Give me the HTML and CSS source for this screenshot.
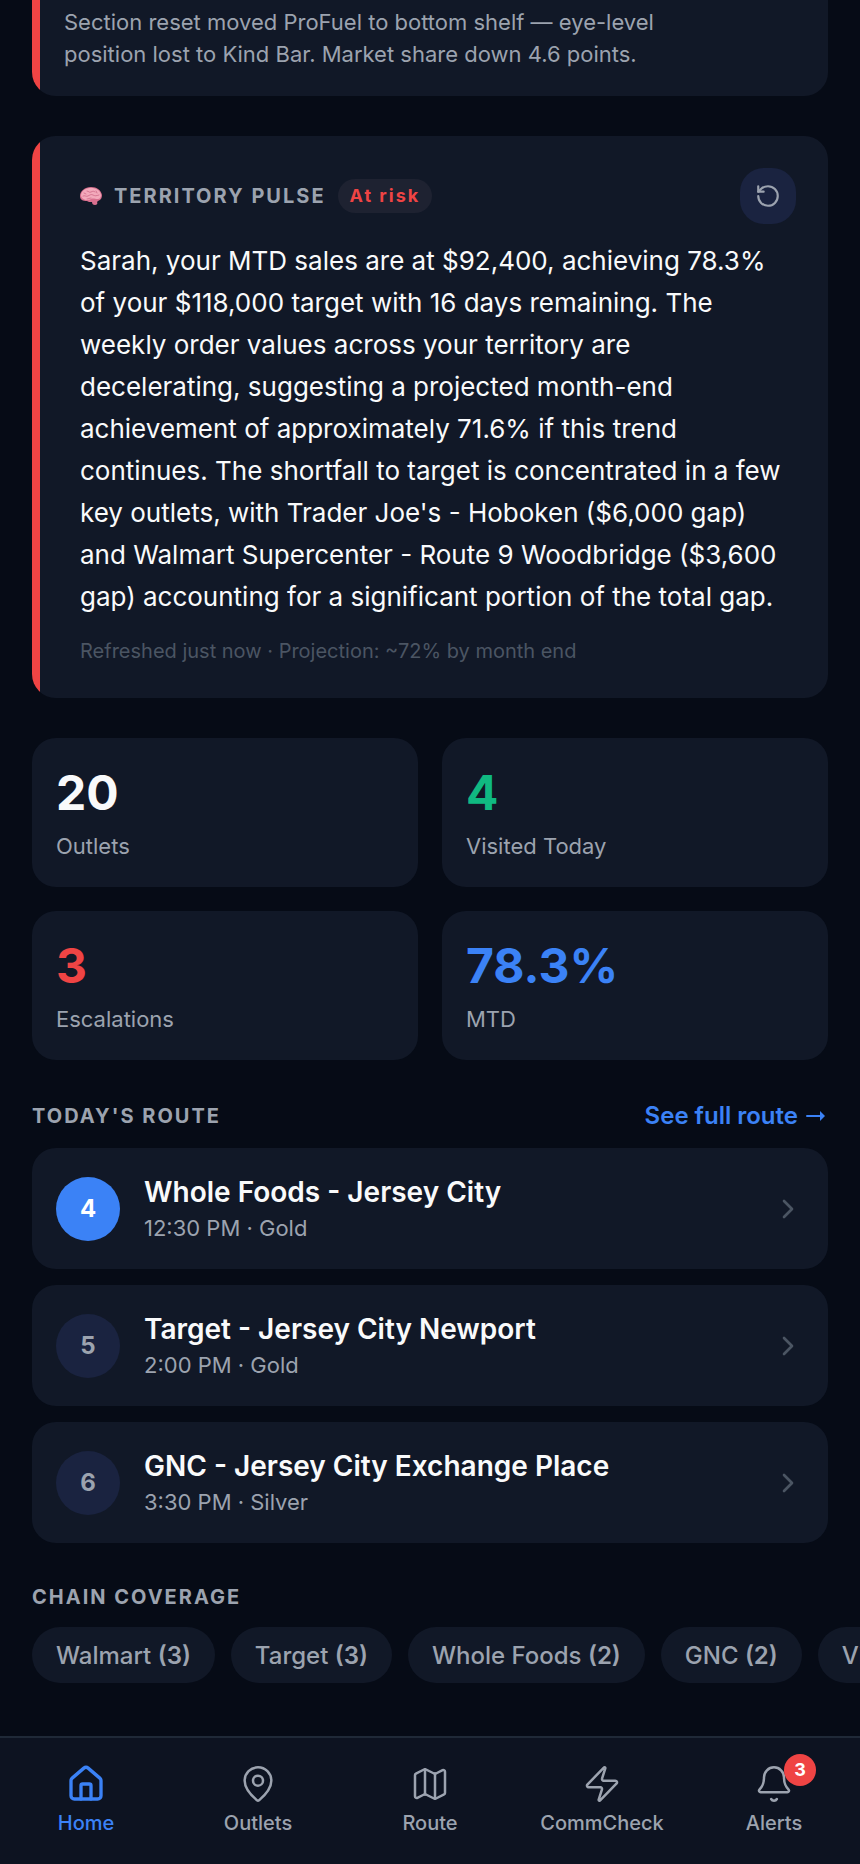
FILE: index.html
```html
<!DOCTYPE html>
<html lang="en">
<head>
    <meta charset="UTF-8">
    <meta name="viewport" content="width=device-width, initial-scale=1.0">
    <title>Territory Home</title>
    <link rel="stylesheet" href="styles.css">
</head>
<body>
    <main class="content">
        <section class="alert-card">
            <p class="alert-text">Section reset moved ProFuel to bottom shelf — eye-level position lost to Kind Bar. Market share down 4.6 points.</p>
        </section>

        <section class="pulse-card">
            <div class="pulse-header">
                <svg class="brain" viewBox="0 0 22 18" aria-hidden="true">
                    <path fill="#d9708f" d="M0 9C0 4 5 0 11 0c6 0 10 3 11 8 0 3-1 5-4 6l-1 1c1 1 0 3-2 3s-3-1-3-3c-2 0-4 0-5-1-4 0-7-1-7-5z"/>
                    <path fill="#f3a9bb" d="M1 8C2 3 6 1 11 1c5 0 9 2 10 7 0 2-1 4-3 4-3 0-5-1-7 0-3 2-10 1-10-4z"/>
                    <path fill="none" stroke="#c8607f" stroke-width=".7" stroke-linecap="round" d="M3 9c2-1 3 1 5 0s3-2 5-1 3 1 6 0M7 4c2 0 2 2 4 1s3-1 4 0M7 12c2 0 2-1 4-1M4 6l2 1M16 4l1 2"/>
                </svg>
                <h2 class="section-title">TERRITORY PULSE</h2>
                <span class="risk-badge">At risk</span>
                <button class="refresh" type="button" aria-label="Refresh">
                    <svg class="icon-refresh" viewBox="0 0 24 24"><path d="M3 12a9 9 0 1 0 9-9 9.75 9.75 0 0 0-6.74 2.74L3 8"/><path d="M3 3v5h5"/></svg>
                </button>
            </div>
            <p class="pulse-text">Sarah, your MTD sales are at $92,400, achieving 78.3% of your $118,000 target with 16 days remaining. The weekly order values across your territory are decelerating, suggesting a projected month-end achievement of approximately 71.6% if this trend continues. The shortfall to target is concentrated in a few key outlets, with Trader Joe's - Hoboken ($6,000 gap) and Walmart Supercenter - Route 9 Woodbridge ($3,600 gap) accounting for a significant portion of the total gap.</p>
            <p class="pulse-footer">Refreshed just now · Projection: ~72% by month end</p>
        </section>

        <section class="stats">
            <div class="stat">
                <div class="stat-value">20</div>
                <div class="stat-label">Outlets</div>
            </div>
            <div class="stat">
                <div class="stat-value green">4</div>
                <div class="stat-label">Visited Today</div>
            </div>
            <div class="stat">
                <div class="stat-value red">3</div>
                <div class="stat-label">Escalations</div>
            </div>
            <div class="stat">
                <div class="stat-value blue">78.3%</div>
                <div class="stat-label">MTD</div>
            </div>
        </section>

        <section class="section">
            <div class="section-header">
                <h2 class="section-title">TODAY'S ROUTE</h2>
                <a class="see-all" href="#route">See full route
                    <svg class="arrow" viewBox="0 0 24 24" aria-hidden="true"><path d="M3 12h14" fill="none" stroke="currentColor" stroke-width="2"/><path d="M16 7l5 5-5 5z" fill="currentColor"/></svg>
                </a>
            </div>
            <div class="route-list">
                <a class="stop" href="#stop-4">
                    <span class="stop-number current">4</span>
                    <span class="stop-info">
                        <span class="stop-name">Whole Foods - Jersey City</span>
                        <span class="stop-meta">12:30 PM · Gold</span>
                    </span>
                    <svg class="chevron" viewBox="0 0 24 24"><path d="m9 18 6-6-6-6"/></svg>
                </a>
                <a class="stop" href="#stop-5">
                    <span class="stop-number">5</span>
                    <span class="stop-info">
                        <span class="stop-name">Target - Jersey City Newport</span>
                        <span class="stop-meta">2:00 PM · Gold</span>
                    </span>
                    <svg class="chevron" viewBox="0 0 24 24"><path d="m9 18 6-6-6-6"/></svg>
                </a>
                <a class="stop" href="#stop-6">
                    <span class="stop-number">6</span>
                    <span class="stop-info">
                        <span class="stop-name">GNC - Jersey City Exchange Place</span>
                        <span class="stop-meta">3:30 PM · Silver</span>
                    </span>
                    <svg class="chevron" viewBox="0 0 24 24"><path d="m9 18 6-6-6-6"/></svg>
                </a>
            </div>
        </section>

        <section class="section">
            <h2 class="section-title">CHAIN COVERAGE</h2>
            <div class="chips">
                <button class="chip" type="button">Walmart <b>(3)</b></button>
                <button class="chip" type="button">Target <b>(3)</b></button>
                <button class="chip" type="button">Whole Foods <b>(2)</b></button>
                <button class="chip" type="button">GNC <b>(2)</b></button>
                <button class="chip" type="button">Vitamin Shoppe <b>(2)</b></button>
            </div>
        </section>
    </main>

    <nav class="tabbar">
        <a class="tab active" href="#home">
            <svg class="tab-icon" viewBox="0 0 24 24"><path d="M15 21v-8a1 1 0 0 0-1-1h-4a1 1 0 0 0-1 1v8"/><path d="M3 10a2 2 0 0 1 .709-1.528l7-5.999a2 2 0 0 1 2.582 0l7 5.999A2 2 0 0 1 21 10v9a2 2 0 0 1-2 2H5a2 2 0 0 1-2-2z"/></svg>
            Home
        </a>
        <a class="tab" href="#outlets">
            <svg class="tab-icon" viewBox="0 0 24 24"><path d="M20 10c0 4.993-5.539 10.193-7.399 11.799a1 1 0 0 1-1.202 0C9.539 20.193 4 14.993 4 10a8 8 0 0 1 16 0"/><circle cx="12" cy="10" r="3"/></svg>
            Outlets
        </a>
        <a class="tab" href="#route">
            <svg class="tab-icon" viewBox="0 0 24 24"><path d="M14.106 5.553a2 2 0 0 0 1.788 0l3.659-1.83A1 1 0 0 1 21 4.619v12.764a1 1 0 0 1-.553.894l-4.553 2.277a2 2 0 0 1-1.788 0l-4.212-2.106a2 2 0 0 0-1.788 0l-3.659 1.83A1 1 0 0 1 3 19.381V6.618a1 1 0 0 1 .553-.894l4.553-2.277a2 2 0 0 1 1.788 0z"/><path d="M15 5.764v15M9 3.236v15"/></svg>
            Route
        </a>
        <a class="tab" href="#commcheck">
            <svg class="tab-icon" viewBox="0 0 24 24"><path d="M4 14a1 1 0 0 1-.78-1.63l9.9-10.2a.5.5 0 0 1 .86.46l-1.92 6.02A1 1 0 0 0 13 10h7a1 1 0 0 1 .78 1.63l-9.9 10.2a.5.5 0 0 1-.86-.46l1.92-6.02A1 1 0 0 0 11 14z"/></svg>
            CommCheck
        </a>
        <a class="tab" href="#alerts">
            <span class="tab-bell">
                <svg class="tab-icon" viewBox="0 0 24 24"><path d="M10.268 21a2 2 0 0 0 3.464 0"/><path d="M3.262 15.326A1 1 0 0 0 4 17h16a1 1 0 0 0 .74-1.673C19.41 13.956 18 12.499 18 8A6 6 0 0 0 6 8c0 4.499-1.411 5.956-2.738 7.326"/></svg>
                <span class="tab-badge">3</span>
            </span>
            Alerts
        </a>
    </nav>
</body>
</html>
```

FILE: styles.css
```css
* {
    box-sizing: border-box;
}
body {
    margin: 0;
    min-height: 100vh;
    display: flex;
    flex-direction: column;
    font-family: Inter, sans-serif;
    background-color: #060b16;
    color: #f9fafb;
    overflow-x: hidden;
}
h2, p {
    margin: 0;
}
a {
    color: inherit;
    text-decoration: none;
}
button {
    font-family: inherit;
    border: none;
    cursor: pointer;
}
svg {
    display: block;
    flex-shrink: 0;
    stroke-linecap: round;
    stroke-linejoin: round;
}
.content {
    padding: 0 32px 40px;
}
/* red stripe is a gradient so its inner edge stays straight */
.alert-card, .pulse-card {
    background: linear-gradient(to right, #ef4444 8px, #111827 8px);
}
.alert-card {
    padding: 6px 120px 26px 32px;
    border-radius: 0 0 24px 24px;
}
.alert-text {
    font-size: 22px;
    line-height: 32px;
    color: #9ca3af;
}

/* Territory pulse */
.pulse-card {
    margin-top: 40px;
    padding: 32px 32px 32px 48px;
    border-radius: 24px;
}
.pulse-header {
    display: flex;
    align-items: center;
    gap: 12px;
    margin-bottom: 16px;
}
.brain {
    width: 22px;
    height: 18px;
}
.section-title {
    font-size: 20px;
    line-height: 28px;
    font-weight: 700;
    letter-spacing: 2px;
    color: #9ca3af;
}
.risk-badge {
    padding: 2px 12px;
    border-radius: 17px;
    background-color: #1e2231;
    color: #ef4444;
    font-size: 18px;
    line-height: 30px;
    font-weight: 700;
    letter-spacing: 2px;
}
.refresh {
    display: flex;
    align-items: center;
    justify-content: center;
    width: 56px;
    height: 56px;
    margin-left: auto;
    padding: 0;
    border-radius: 24px;
    background-color: #1a2340;
}
.icon-refresh {
    width: 26px;
    height: 26px;
    fill: none;
    stroke: #9ca3af;
    stroke-width: 2;
}
.pulse-text {
    font-size: 26px;
    line-height: 42px;
}
.pulse-footer {
    margin-top: 18px;
    font-size: 20px;
    line-height: 30px;
    color: #4b5563;
}

/* Stats */
.stats {
    display: grid;
    grid-template-columns: 1fr 1fr;
    gap: 24px;
    margin-top: 40px;
}
.stat {
    padding: 24px;
    border-radius: 24px;
    background-color: #111827;
}
.stat-value {
    font-size: 48px;
    line-height: 61px;
    font-weight: 700;
}
.stat-label {
    margin-top: 7px;
    font-size: 22px;
    line-height: 33px;
    color: #9ca3af;
}
.green {
    color: #10b981;
}
.red {
    color: #ef4444;
}
.blue {
    color: #3b82f6;
}

/* Route */
.section {
    margin-top: 40px;
}
.section-header {
    display: flex;
    align-items: center;
    justify-content: space-between;
}
.see-all {
    display: flex;
    align-items: center;
    gap: 6px;
    font-size: 24px;
    line-height: 32px;
    font-weight: 600;
    color: #3b82f6;
}
.arrow {
    width: 24px;
    height: 24px;
}
.route-list {
    display: flex;
    flex-direction: column;
    gap: 16px;
    margin-top: 16px;
}
.stop {
    display: flex;
    align-items: center;
    gap: 24px;
    padding: 24px;
    border-radius: 24px;
    background-color: #111827;
}
.stop-number {
    display: flex;
    align-items: center;
    justify-content: center;
    width: 64px;
    height: 64px;
    border-radius: 50%;
    background-color: #1a2340;
    color: #9ca3af;
    font-size: 24px;
    font-weight: 700;
}
.stop-number.current {
    background-color: #3b82f6;
    color: #fff;
}
.stop-info {
    display: flex;
    flex-direction: column;
    flex: 1;
}
.stop-name {
    font-size: 28px;
    line-height: 40px;
    font-weight: 600;
}
.stop-meta {
    font-size: 22px;
    line-height: 33px;
    color: #9ca3af;
}
.chevron {
    width: 32px;
    height: 32px;
    fill: none;
    stroke: #4b5563;
    stroke-width: 2;
}

/* Chains */
.chips {
    display: flex;
    gap: 16px;
    margin-top: 16px;
    margin-right: -32px;
    overflow-x: auto;
    scrollbar-width: none;
}
.chip {
    flex-shrink: 0;
    height: 56px;
    padding: 0 24px;
    border-radius: 28px;
    background-color: #111827;
    color: #9ca3af;
    font-size: 24px;
    font-weight: 500;
}
.chip b {
    font-weight: 600;
}

/* Bottom tabs */
.tabbar {
    display: grid;
    grid-template-columns: repeat(5, 1fr);
    margin-top: auto;
    padding: 26px 0;
    border-top: 2px solid #1f2937;
    background-color: #0d1321;
}
.tab {
    display: flex;
    flex-direction: column;
    align-items: center;
    gap: 4px;
    font-size: 20px;
    line-height: 30px;
    font-weight: 500;
    color: #9ca3af;
}
.tab-icon {
    width: 40px;
    height: 40px;
    fill: none;
    stroke: currentColor;
    stroke-width: 1.5;
}
.tab.active {
    color: #3b82f6;
}
.tab.active .tab-icon {
    stroke-width: 2;
}
.tab-bell {
    position: relative;
}
.tab-badge {
    position: absolute;
    top: -10px;
    right: -22px;
    width: 32px;
    height: 32px;
    border-radius: 50%;
    background-color: #ef4444;
    color: #fff;
    font-size: 18px;
    line-height: 32px;
    font-weight: 700;
    text-align: center;
}
```
